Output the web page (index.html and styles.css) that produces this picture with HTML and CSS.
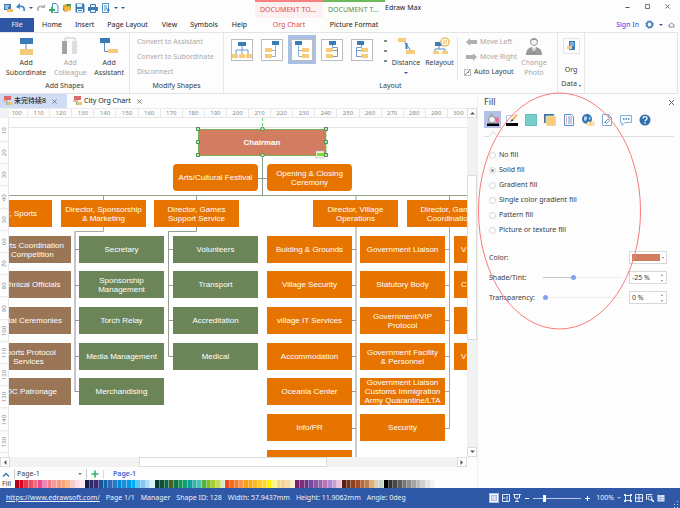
FILE: index.html
```html
<!DOCTYPE html>
<html lang="en">
<head>
<meta charset="utf-8">
<title>Edraw Max</title>
<link rel="stylesheet" href="styles.css">
</head>
<body>
<header class="top">
  <div class="top-left">
    <div class="qat">
      <button aria-label="Application menu"><svg width="10" height="10" viewBox="0 0 10 10"><path d="M1 1h7v6H1z" fill="#3a7ab5"/><path d="M2 3h4M2 5h3" stroke="#fff"/><path d="M4 6h6v3H4z" fill="#f0c060"/></svg></button>
      <button aria-label="Undo"><svg width="10" height="10" viewBox="0 0 10 10"><path d="M2 4c4-2 7 0 6 4" fill="none" stroke="#3a86c8" stroke-width="1.6"/><path d="M0 4l4-4v6z" fill="#3a86c8"/></svg></button>
      <i class="caret"></i>
      <button aria-label="Redo"><svg width="10" height="10" viewBox="0 0 10 10"><path d="M8 4C4 2 1 4 2 8" fill="none" stroke="#b4b4b4" stroke-width="1.6"/><path d="M9 5H5l4-4z" fill="#b4b4b4"/></svg></button>
      <button aria-label="New"><svg width="10" height="10" viewBox="0 0 10 10"><path d="M3.500 4V.5H7L9 3v6.500H5" fill="#fff" stroke="#4a8fc4"/><path d="M3 4v6M0 7h6" stroke="#2fae6b" stroke-width="2"/></svg></button>
      <button aria-label="Open"><svg width="10" height="10" viewBox="0 0 10 10"><path d="M1 2l3-1 1 1 4-1v6L3 9z" fill="#e9a72f"/><path d="M1 2l2 7-2-2z" fill="#c76b2c"/><path d="M4 1h5v4L6 6z" fill="#3d9c5b"/><path d="M3 4l6-1-2 5-4 1z" fill="#f3bd45"/></svg></button>
      <button aria-label="Save"><svg width="10" height="10" viewBox="0 0 10 10"><path d="M.5.5h8L9.500 2v7.500h-9z" fill="#3a7ab5"/><path d="M2 1h5v3H2zM2 6h6v3H2z" fill="#e6eff8"/><path d="M3 7.500h4" stroke="#3a7ab5"/></svg></button>
      <button aria-label="Print"><svg width="10" height="10" viewBox="0 0 10 10"><path d="M0 4h10v4H0z" fill="#3a7ab5"/><path d="M2.500 4V1.500h5V4M2.500 6.500h5v3h-5z" fill="#eaf2fa" stroke="#3a7ab5"/></svg></button>
      <button aria-label="Preview"><svg width="10" height="10" viewBox="0 0 10 10"><path d="M1.500.5h6v9h-6z" fill="#fff" stroke="#4a8fc4"/><path d="M3 3h3M3 5h3M3 7h2" stroke="#4a8fc4"/><path d="M5 5l4 2-2 2z" fill="#3a7ab5"/></svg></button>
      <i class="caret"></i>
      <i class="caret lined"></i>
    </div>
    <nav class="tabs">
      <button class="file">File</button>
      <button class="t-home">Home</button>
      <button class="t-insert">Insert</button>
      <button class="t-page">Page Layout</button>
      <button class="t-view">View</button>
      <button class="t-symbols">Symbols</button>
      <button class="t-help">Help</button>
    </nav>
  </div>
  <div class="context red"><span>DOCUMENT TO...</span><button>Org Chart</button></div>
  <div class="context green"><span>DOCUMENT T...</span><button>Picture Format</button></div>
  <div class="top-right">
    <div class="titlebar"><span class="title">Edraw Max</span>
      <div class="winbtns">
        <button aria-label="Minimize"><svg width="7" height="7" viewBox="0 0 7 7"><path d="M1.500 4.500h4" stroke="#555"/></svg></button>
        <button aria-label="Maximize"><svg width="7" height="7" viewBox="0 0 7 7"><path d="M1.500 1.500h4v4h-4z" fill="none" stroke="#777"/></svg></button>
        <button aria-label="Close"><svg width="7" height="7" viewBox="0 0 7 7"><path d="M1.500 1.500l4 4M5.500 1.500l-4 4" stroke="#666"/></svg></button>
      </div>
    </div>
    <div class="account"><a href="#">Sign In</a>
      <button aria-label="Options"><svg width="9" height="9" viewBox="0 0 9 9"><circle cx="4.500" cy="4.500" r="2.700" fill="none" stroke="#3f7fc0" stroke-width="1.600"/><circle cx="4.500" cy="4.500" r="3.800" fill="none" stroke="#3f7fc0" stroke-width="1" stroke-dasharray="1.500 1.500"/></svg></button>
      <i class="caret"></i>
      <button aria-label="Collapse ribbon" class="collapse"><svg width="7" height="6" viewBox="0 0 7 6"><path d="M1 3l2.500-2L6 3v2H1z" fill="none" stroke="#888"/></svg></button>
    </div>
  </div>
</header>

<section class="ribbon">
  <div class="group g-add">
    <div class="group-body">
      <button class="big"><svg width="20" height="20" viewBox="0 0 20 20"><path d="M10 6v7" stroke="#5b8fc0"/><path d="M4 1h13v6H4z" fill="#3a7ab5"/><path d="M4 12h13v6H4z" fill="#f4cc7b"/></svg>Add<br>Subordinate</button>
      <button class="big off"><svg width="20" height="20" viewBox="0 0 20 20"><path d="M5 4V1h10v3" fill="none" stroke="#c4c4c4"/><path d="M2 4h5v13H2z" fill="#a3a3a3"/><path d="M12 4h5v13h-5z" fill="#dedede"/></svg>Add<br>Colleague</button>
      <button class="big"><svg width="20" height="20" viewBox="0 0 20 20"><path d="M5.500 6v8.500H10" fill="none" stroke="#5b8fc0"/><path d="M1 1h10v5H1z" fill="#3a7ab5"/><path d="M9 12h10v4H9z" fill="#f4cc7b"/></svg>Add<br>Assistant</button>
    </div>
    <div class="group-label">Add Shapes</div>
  </div>
  <div class="group g-modify">
    <div class="group-body lines off">
      <button>Convert to Assistant</button>
      <button>Convert to Subordinate</button>
      <button>Disconnect</button>
    </div>
    <div class="group-label">Modify Shapes</div>
  </div>
  <div class="group g-layout">
    <div class="group-body">
      <div class="gallery">
        <button aria-label="Horizontal"><svg width="20" height="20" viewBox="0 0 20 20"><path d="M10 6v8M4 14v-4h12v4" fill="none" stroke="#6a9bd0"/><path d="M6 2h8v4H6z" fill="#3a7ab5"/><path d="M0 14h6v4H0zM7 14h6v4H7zM14 14h6v4h-6z" fill="#f4cc7b"/></svg></button>
        <button aria-label="Left hanging"><svg width="20" height="20" viewBox="0 0 20 20"><path d="M13.500 5v11.500H9M13.500 10.500H9" fill="none" stroke="#8fb4dc"/><path d="M10 1h7v4h-7z" fill="#3a7ab5"/><path d="M3 8h7v4H3zM3 14h7v4H3z" fill="#f4cc7b"/></svg></button>
        <button aria-label="Right hanging" class="on"><svg width="20" height="20" viewBox="0 0 20 20"><path d="M6.500 5v11.500H11M6.500 10.500H11" fill="none" stroke="#8fb4dc"/><path d="M3 1h7v4H3z" fill="#3a7ab5"/><path d="M10 8h7v4h-7zM10 14h7v4h-7z" fill="#f4cc7b"/></svg></button>
        <button aria-label="Left offset"><svg width="20" height="20" viewBox="0 0 20 20"><path d="M10.500 5v2.500h5v9H11M15.500 10.500H11" fill="none" stroke="#6a9bd0"/><path d="M7 1h7v4H7z" fill="#3a7ab5"/><path d="M4 8h7v4H4zM4 14h7v4H4z" fill="#f4cc7b"/></svg></button>
        <button aria-label="Right offset"><svg width="20" height="20" viewBox="0 0 20 20"><path d="M9.500 5v2.500h-5v9H9M4.500 10.500H9" fill="none" stroke="#6a9bd0"/><path d="M5 1h7v4H5z" fill="#3a7ab5"/><path d="M9 8h7v4H9zM9 14h7v4H9z" fill="#f4cc7b"/></svg></button>
      </div>
      <div class="spin"><i></i><i></i><i></i></div>
      <button class="big distance"><svg width="20" height="20" viewBox="0 0 20 20"><path d="M8 4l7 10" stroke="#5b8fc0"/><path d="M10.500 6v6" stroke="#3a7ab5" stroke-width="2"/><path d="M2 1h8v4H2zM10 13h9v4h-9z" fill="#f4cc7b"/></svg>Distance<i class="caret"></i></button>
      <button class="big relayout"><svg width="20" height="20" viewBox="0 0 20 20"><path d="M9 8v4M5 14v-2h10v2" fill="none" stroke="#5b8fc0"/><path d="M5 5h7v4H5z" fill="#3a7ab5"/><path d="M3 14h6v3H3zM12 14h6v3h-6z" fill="#f4cc7b"/><circle cx="15" cy="5" r="4" fill="#fff" stroke="#f4c05f" stroke-width="1.600"/><path d="M13 4h4l-1-1M17 6h-4l1 1" fill="none" stroke="#f0b650"/></svg>Relayout</button>
      <div class="lines moves">
        <button class="off"><svg width="12" height="8" viewBox="0 0 12 8"><path d="M0 4l4-4v2h7v4H4v2z" fill="#b0b0b0"/></svg>Move Left</button>
        <button class="off"><svg width="12" height="8" viewBox="0 0 12 8"><path d="M11 4L7 0v2H0v4h7v2z" fill="#b0b0b0"/></svg>Move Right</button>
        <label class="auto"><input type="checkbox" checked>Auto Layout</label>
      </div>
      <button class="big off photo"><svg width="20" height="20" viewBox="0 0 20 20"><circle cx="10" cy="5" r="3.500" fill="#f4f4f4" stroke="#999"/><path d="M6 5c0-5 8-5 8 0l-2-2H8z" fill="#999"/><path d="M2 18c0-5 2-7 6-8l2 2 2-2c4 1 6 3 6 8z" fill="#999"/><path d="M8 10l2 8 2-8-2 2z" fill="#fff"/><path d="M10 11l-1 6h2z" fill="#777"/></svg>Change<br>Photo</button>
    </div>
    <div class="group-label">Layout</div>
  </div>
  <div class="group g-data">
    <button class="data"><span class="tile"><svg width="9" height="10" viewBox="0 0 9 10"><path d="M2 0h6v9H2z" fill="#3a7ab5"/><path d="M3 2h4M3 4h4" stroke="#cfe0f2"/><path d="M0 5h5v3H0z" fill="#f4cc7b"/></svg></span><span>Org</span><span>Data <i class="caret"></i></span></button>
  </div>
</section>

<main class="work">
  <section class="editor">
    <div class="doctabs">
      <div class="doctab on"><svg width="9" height="10" viewBox="0 0 9 10"><path d="M1 0h7v4H1z" fill="#dd6a6a"/><path d="M0 4h5v2H0z" fill="#efb0a0"/><path d="M3.500 6v2.500H5" fill="none" stroke="#7aa"/><path d="M4 6h5v3H4z" fill="#f2c55c"/></svg><span lang="zh">未完待续8</span><button aria-label="Close tab"><svg width="5" height="5" viewBox="0 0 5 5"><path d="M.5.5l4 4M4.500.5l-4 4" stroke="#666" stroke-width=".8"/></svg></button></div>
      <div class="doctab"><svg width="9" height="10" viewBox="0 0 9 10"><path d="M1 0h7v4H1z" fill="#dd6a6a"/><path d="M0 4h5v2H0z" fill="#efb0a0"/><path d="M3.500 6v2.500H5" fill="none" stroke="#7aa"/><path d="M4 6h5v3H4z" fill="#f2c55c"/></svg><span>City Org Chart</span><button aria-label="Close tab"><svg width="5" height="5" viewBox="0 0 5 5"><path d="M.5.5l4 4M4.500.5l-4 4" stroke="#666" stroke-width=".8"/></svg></button></div>
    </div>
    <div class="sheet">
      <div class="corner"></div>
      <div class="ruler-h"><div class="marks"><span>100</span><span>110</span><span>120</span><span>130</span><span>140</span><span>150</span><span>160</span><span>170</span><span>180</span><span>190</span><span>200</span><span>210</span><span>220</span><span>230</span><span>240</span><span>250</span><span>260</span><span>270</span><span>280</span><span>290</span><span>300</span></div></div>
      <div class="ruler-v"><span>10</span><span>20</span><span>30</span><span>40</span><span>50</span><span>60</span><span>70</span><span>80</span><span>90</span><span>100</span><span>110</span><span>120</span><span>130</span><span>140</span><span>150</span></div>
      <div class="canvas">
        <svg class="wires" width="458" height="339" viewBox="9 118 458 339" fill="none">
          <path d="M9 127.500H467" stroke="#e4e4e4"/>
          <path d="M262.500 155V195M258 178.500H267" stroke="#8a9a8a"/>
          <path d="M9 195.500H467M103.500 195V200M196.500 195V200M356 195V200M449.500 195V200" stroke="#8fa287"/>
          <path d="M103.500 227V231.500H75" stroke="#a8a8a8"/>
          <path d="M75 231V392" stroke="#c6c6c8" stroke-width="2"/>
          <path d="M75 249.500H79M75 285.500H79M75 320.500H79M75 356.500H79M75 391.500H79" stroke="#999"/>
          <path d="M196.500 227V231.500H168.500V356.500H173M168 249.500H173M168 285.500H173M168 320.500H173" stroke="#94a08c"/>
          <path d="M356 227V457" stroke="#cacaca" stroke-width="2"/>
          <path d="M352 249.500H356M352 285.500H356M352 320.500H356M352 356.500H356M352 391.500H356M352 428.500H356" stroke="#999"/>
          <path d="M449.500 227V428.500H445M445 249.500H449M445 285.500H449M445 320.500H449M445 356.500H449M445 391.500H449" stroke="#a8a8a8"/>
        </svg>
        <div class="node chair">Chairman</div>
        <div class="node soft c3 top-row">Arts/Cultural Festival</div>
        <div class="node soft c4 top-row">Opening &amp; Closing<br>Ceremony</div>

        <div class="node d1 dir">Director, Sports</div>
        <div class="node d2 dir">Director, Sponsorship<br>&amp; Marketing</div>
        <div class="node d3 dir">Director, Games<br>Support Service</div>
        <div class="node d4 dir">Director, Village<br>Operations</div>
        <div class="node d5 dir">Director, Games<br>Coordination</div>

        <div class="node brown c1 r1">Sports Coordination<br>&amp; Competition</div>
        <div class="node brown c1 r2">Technical Officials</div>
        <div class="node brown c1 r3">Medal Ceremonies</div>
        <div class="node brown c1 r4">Sports Protocol<br>Services</div>
        <div class="node brown c1 r5">NOC Patronage</div>

        <div class="node olive c2 r1">Secretary</div>
        <div class="node olive c2 r2">Sponsorship<br>Management</div>
        <div class="node olive c2 r3">Torch Relay</div>
        <div class="node olive c2 r4">Media Management</div>
        <div class="node olive c2 r5">Merchandising</div>

        <div class="node olive c3 r1">Volunteers</div>
        <div class="node olive c3 r2">Transport</div>
        <div class="node olive c3 r3">Accreditation</div>
        <div class="node olive c3 r4">Medical</div>

        <div class="node c4 r1">Buiding &amp; Grounds</div>
        <div class="node c4 r2">Village Security</div>
        <div class="node c4 r3">village IT Services</div>
        <div class="node c4 r4">Accommodation</div>
        <div class="node c4 r5">Oceania Center</div>
        <div class="node c4 r6">Info/PR</div>
        <div class="node c4 r7"></div>

        <div class="node c5 r1">Government Liaison</div>
        <div class="node c5 r2">Statutory Body</div>
        <div class="node c5 r3">Government/VIP<br>Protocol</div>
        <div class="node c5 r4">Government Facility<br>&amp; Personnel</div>
        <div class="node c5 r5">Government Liaison<br>Customs Immigration<br>Army Quarantine/LTA</div>
        <div class="node c5 r6">Security</div>

        <div class="node cut c6 r1">V</div>
        <div class="node cut c6 r2">C</div>
        <div class="node c6 r3"></div>
        <div class="node cut c6 r4">V</div>

        <svg class="selection" width="134" height="44" viewBox="195 115 134 44">
          <path d="M262.500 118v11" stroke="#5fe05f" stroke-dasharray="3 2"/>
          <path d="M198.500 129.500h127.500v26H198.500z" fill="none" stroke="#5cc34c" stroke-dasharray="3 1"/>
          <path d="M316 151h8v7h-8z" fill="#eee" stroke="#aaa" stroke-width=".5"/><path d="M317 153h7v3h-7z" fill="#7be01f"/>
          <g fill="#b8f0b8" stroke="#4d8a56"><path d="M196.500 127.500h3v3h-3zM196.500 140.500h3v3h-3zM196.500 153.500h3v3h-3zM324.500 127.500h3v3h-3zM324.500 140.500h3v3h-3zM324.500 153.500h3v3h-3z"/><circle cx="262.500" cy="129" r="1.800"/><circle cx="262.500" cy="155" r="1.800"/></g>
        </svg>
      </div>
      <div class="scroll-v"><button aria-label="Scroll up"><svg width="5" height="4" viewBox="0 0 5 4"><path d="M0 3.500L2.500 1 5 3.500z" fill="#555"/></svg></button><div class="track"><div class="thumb"></div></div><button aria-label="Scroll down"><svg width="5" height="4" viewBox="0 0 5 4"><path d="M0 .5L2.500 3 5 .5z" fill="#555"/></svg></button></div>
      <div class="scroll-h"><button aria-label="Scroll left"><svg width="4" height="5" viewBox="0 0 4 5"><path d="M3.500 0L1 2.500 3.500 5z" fill="#555"/></svg></button><div class="track"><div class="thumb"></div></div><button aria-label="Scroll right"><svg width="4" height="5" viewBox="0 0 4 5"><path d="M.5 0L3 2.500.5 5z" fill="#555"/></svg></button></div>
    </div>
    <div class="pagebar">
      <svg width="8" height="5" viewBox="0 0 8 5"><path d="M1 4.500L4 1.500l3 3" fill="none" stroke="#2f78b8" stroke-width="1.400"/></svg>
      <span class="page-select"><select aria-label="Page"><option>Page-1</option></select><i class="caret"></i></span>
      <button aria-label="Add page" class="plus"><svg width="8" height="8" viewBox="0 0 8 8"><path d="M4 .5v7M.5 4h7" stroke="#35b06c" stroke-width="1.600"/></svg></button>
      <button class="pagetab">Page-1</button>
    </div>
    <div class="colorbar"><span>Fill</span><div class="swatches" id="swatches"></div></div>
  </section>

  <aside class="panel">
    <div class="panel-head"><h2>Fill</h2><button aria-label="Close panel"><svg width="7" height="7" viewBox="0 0 7 7"><path d="M1 1l5 5M6 1L1 6" stroke="#666"/></svg></button></div>
    <div class="tools">
      <button class="on" aria-label="Fill"><svg width="14" height="14" viewBox="0 0 14 14"><path d="M3 4l4-1 3 4-3 3-4-1z" fill="#f2f2f2" stroke="#999"/><path d="M4 4c0-4 3-4 3 0" fill="none" stroke="#999"/><path d="M9 4l4 1v4l-2 1-2-3z" fill="#e8709c"/><path d="M1 10.500h12v2.500H1z" fill="#000"/></svg></button>
      <button aria-label="Line"><svg width="14" height="14" viewBox="0 0 14 14"><path d="M1.500 9V2.500H9" fill="none" stroke="#b3cbe8"/><path d="M6 8l1-2 4-5 2 1-4 5z" fill="#f0c060"/><path d="M5 9l2-3 1.500 1.500z" fill="#444"/><path d="M1 10h12v3H1z" fill="#000"/></svg></button>
      <button aria-label="Shadow"><svg width="14" height="14" viewBox="0 0 14 14"><path d="M1.500 1.500h11v11h-11z" fill="#76cfc9" stroke="#5fbfb8"/></svg></button>
      <button aria-label="Layers"><svg width="14" height="14" viewBox="0 0 14 14"><path d="M1 1h10v9H1z" fill="#3f76ac"/><path d="M3 3h10v10H3z" fill="#f4cc7b" stroke="#fff" stroke-width=".5"/></svg></button>
      <button aria-label="Page"><svg width="14" height="14" viewBox="0 0 14 14"><path d="M2.500 1.500h7l2 2v9h-9z" fill="#fff" stroke="#5b8fc8"/><path d="M4 4h1M4 6h1M4 8h1M4 10h1" stroke="#e05050"/><path d="M6 4h4M6 6h4M6 8h4M6 10h4" stroke="#6b9fd0"/></svg></button>
      <button aria-label="Hyperlink"><svg width="14" height="14" viewBox="0 0 14 14"><circle cx="6" cy="6" r="5" fill="#2f73b0"/><path d="M3 4c2-2 4 0 3 2s-2 3-3 1zM8 3l2 3-2 1z" fill="#b5d3ee"/><rect x="6" y="9" width="4" height="3" rx="1" fill="#fff" stroke="#f0c060"/><rect x="9" y="9" width="4" height="3" rx="1" fill="none" stroke="#f0c060"/></svg></button>
      <button aria-label="Attachment"><svg width="14" height="14" viewBox="0 0 14 14"><path d="M2.500 1.500h6l3 3v8h-9z" fill="#fff" stroke="#8aa9cc"/><path d="M8.500 1.500v3h3" fill="none" stroke="#8aa9cc"/><path d="M4 10l4-4 1.500 1.500-3 3L5 9" fill="none" stroke="#6b9fd0"/></svg></button>
      <button aria-label="Comment"><svg width="14" height="14" viewBox="0 0 14 14"><path d="M1.500 2.500h11v7H6l-3 3v-3H1.500z" fill="#fff" stroke="#7fb0de"/><path d="M4 6h1.500M6.500 6H8M9 6h1.500" stroke="#3a7ab5" stroke-width="1.500"/></svg></button>
      <button aria-label="Help"><svg width="14" height="14" viewBox="0 0 14 14"><circle cx="7" cy="7" r="5.500" fill="#2f6fad"/><path d="M5 5.500c0-2.500 4-2.500 4 0 0 1.500-2 1.200-2 2.800M7 9.300v1.400" fill="none" stroke="#fff" stroke-width="1.300"/></svg></button>
    </div>
    <svg class="pointer" width="190" height="9" viewBox="0 0 190 9"><path d="M0 7.500h5l4-5 4 5h177" fill="none" stroke="#dedede"/></svg>
    <div class="radios">
      <label><input type="radio" name="fill">No fill</label>
      <label><input type="radio" name="fill" checked>Solid fill</label>
      <label><input type="radio" name="fill">Gradient fill</label>
      <label><input type="radio" name="fill">Single color gradient fill</label>
      <label><input type="radio" name="fill">Pattern fill</label>
      <label><input type="radio" name="fill">Picture or texture fill</label>
    </div>
    <div class="fields">
      <label for="color">Color:</label><span></span>
      <button id="color" class="box color" aria-label="Color"><b></b><i class="caret"></i></button>
      <label for="shade">Shade/Tint:</label><input class="shade" id="shade" type="range" min="-100" max="100" value="-25">
      <span class="box"><input type="text" aria-label="Shade value" value="-25 %"><span class="updown"><i></i><i></i></span></span>
      <label for="trans">Transparency:</label><input id="trans" type="range" min="0" max="100" value="0">
      <span class="box"><input type="text" aria-label="Transparency value" value="0 %"><span class="updown"><i></i><i></i></span></span>
    </div>
    <svg class="ring" width="166" height="242" viewBox="0 0 166 242"><ellipse cx="82.500" cy="121" rx="81" ry="118" fill="none" stroke="#fa7a7a"/></svg>
  </aside>
</main>

<footer class="status">
  <a href="#">https://www.edrawsoft.com/</a><span>Page 1/1</span><span>Manager</span><span>Shape ID: 128</span><span>Width: 57.9437mm</span><span>Height: 11.9062mm</span><span>Angle: 0deg</span>
  <div class="view">
    <button class="on" aria-label="Normal view"><svg width="8" height="8" viewBox="0 0 8 8"><path d="M.5.5h7v7h-7zM2 3h4M2 5h4" fill="none" stroke="#fff"/></svg></button>
    <button aria-label="Full page view"><svg width="8" height="8" viewBox="0 0 8 8"><path d="M.5.5h7v7h-7zM.5 4h3M5 2v5" fill="none" stroke="#dfe7f5"/></svg></button>
    <button aria-label="Presentation"><svg width="8" height="8" viewBox="0 0 8 8"><path d="M0 .5h8M1.500 1v3h5V1M4 4v3.500M2 7.500h4" fill="none" stroke="#dfe7f5"/></svg></button>
    <button aria-label="Zoom out"><svg width="6" height="6" viewBox="0 0 6 6"><path d="M1 3.500h4" stroke="#fff"/></svg></button>
    <input type="range" aria-label="Zoom" min="0" max="100" value="22">
    <button aria-label="Zoom in"><svg width="6" height="6" viewBox="0 0 6 6"><path d="M1 3.500h5M3.500 1v5" stroke="#fff"/></svg></button>
    <span class="pct">100%</span><i class="caret"></i>
    <button aria-label="Fit page"><svg width="8" height="8" viewBox="0 0 8 8"><path d="M1.500 1.500h5v5h-5z" fill="none" stroke="#dfe7f5"/><path d="M0 0h2v2H0zM6 0h2v2H6zM0 6h2v2H0zM6 6h2v2H6z" fill="#dfe7f5"/></svg></button>
    <button aria-label="Fit width"><svg width="8" height="8" viewBox="0 0 8 8"><path d="M.5.5h7v7h-7zM4 1v6M1 4h6" fill="none" stroke="#dfe7f5"/></svg></button>
    <button aria-label="Zoom area"><svg width="8" height="8" viewBox="0 0 8 8"><path d="M.5 6V.5h6" fill="none" stroke="#dfe7f5"/><circle cx="4" cy="4" r="2" fill="none" stroke="#dfe7f5"/><path d="M5 5l3 3" stroke="#fff" stroke-width="1.400"/></svg></button>
    <button aria-label="Grid"><svg width="8" height="8" viewBox="0 0 8 8"><path d="M.5 1h7v6.500h-7z" fill="#dfe7f5"/><path d="M0 3.500h8M0 5.500h8M3.500 1v7" stroke="#7d97cc" stroke-width=".6"/></svg></button>
    <svg class="grip" width="7" height="7" viewBox="0 0 7 7"><path d="M5 0h1v1H5zM5 3h1v1H5zM5 6h1v1H5zM2 3h1v1H2zM2 6h1v1H2z" fill="#c5d1ea"/></svg>
  </div>
</footer>
<script src="palette.js"></script>
</body>
</html>
```
FILE: palette.js
```js
const palette = [
  "#b5001c","#e0001b","#e23b50","#ef4c62","#f2707e","#ea4a94","#f086b4","#f2808a","#f59a96","#f49a86","#f7a472","#fab98c","#f4cdd4","#fadbe6","#fce8ee",
  "#0f1c4d","#282a62","#3a2a78","#1b5591","#0a67b0","#3566b5","#1c7fc8","#0088d4","#1a8fe0","#0099e8","#00acf4","#5cc6f4","#88c4ee","#b2dcf4","#d6f0fa",
  "#063c2c","#0d5034","#0a6644","#4c5e24","#0b7848","#119a4e","#109f76","#109f96","#34b6aa","#4fc0b0","#55b03c","#84bf1c","#a8d034","#c8dc5c","#d2ecd2",
  "#ee4a1c","#f26a20","#f47c2c","#f79654","#f99f10","#fbab10","#fcb72c","#fdcc2e","#fdda1c","#fdf000","#fbf48c","#f9d884","#f8d098","#f4dcae","#fcf0cc",
  "#74206c","#7c2e7c","#663494","#744a9e","#8c5aa4","#9a68ac","#c470b2","#a88cd0","#c8a0d0","#efc2de",
  "#5a2010","#7a3014","#8a4220","#a44a20","#b86a3a","#bc8050","#dcae78","#d6cfc2","#c4d6ca",
  "#000000","#303030","#484848","#5e5e5e","#767676","#8e8e8e","#a4a4a4","#bababa","#d0d0d0","#e4e4e4","#f4f4f4"
];
const strip = document.getElementById("swatches");
palette.forEach(color => {
  const cell = document.createElement("span");
  cell.style.background = color;
  strip.append(cell);
});
```
FILE: styles.css
```css
* { box-sizing: border-box; }
body {
  margin: 0;
  min-height: 100vh;
  display: flex;
  flex-direction: column;
  background: #fdfdfd;
  color: #3c3c3c;
  font: 7px/10px "Noto Sans", "Noto Sans CJK SC", sans-serif;
}
button, input, select { font: inherit; color: inherit; border: 0; padding: 0; margin: 0; background: none; }
svg { display: block; flex: none; }
a { color: inherit; }
.caret { display: inline-block; flex: none; border: 2px solid transparent; border-top-color: #2f5597; border-bottom: 0; }
.caret.lined { box-shadow: 0 -2px 0 -1px #2f5597; }

/* title bar and ribbon tabs */
.top { display: flex; height: 32px; color: #222; }
.top-left { width: 255px; }
.qat { display: flex; align-items: center; gap: 3px; height: 15px; padding-left: 3px; }
.tabs { display: flex; align-items: center; height: 14px; margin-top: 3px; gap: 13px; }
.tabs button { line-height: 14px; }
.tabs .file { width: 34px; margin-right: -5px; background: #2f56a5; color: #e8eefa; }
.tabs .t-view, .tabs .t-help { margin-left: 1px; }
.context { display: flex; flex-direction: column; width: 68px; border-top: 2px solid; }
.context span { padding: 2px 5px; height: 16px; line-height: 11px; white-space: nowrap; }
.context button { line-height: 14px; }
.context.red { border-color: #f98080; color: #dc4b55; }
.context.red span { background: #fdf0f0; }
.context.green { width: 62px; border-color: #6cba5c; color: #5c8f55; }
.context.green button { color: #222; }
.context.green, .context.green button { background: #fbfdf9; white-space: nowrap; }
.top-right { flex: 1; }
.titlebar { display: flex; justify-content: space-between; height: 17px; }
.title { line-height: 16px; }
.winbtns { display: flex; gap: 13px; padding: 3px 9px 0 0; height: 10px; }
.account { display: flex; align-items: center; justify-content: flex-end; gap: 5px; height: 15px; padding-right: 5px; }
.account a { color: #3a3af0; text-decoration: none; }
.account a + button { margin-left: 1px; }

/* ribbon */
.ribbon { display: flex; height: 62px; margin-right: 2px; border: 1px solid #e4e4e4; border-left: 0; }
.group { display: flex; flex-direction: column; padding-top: 4px; border-right: 1px solid #e6e6e6; }
.group-body { display: flex; height: 43px; }
.group-label { padding-top: 1px; text-align: center; }
.g-add { width: 130px; }
.g-add .group-body { padding: 0 5px 0 6px; justify-content: space-between; }
.g-modify { width: 94px; }
.g-layout { width: 334px; }
.g-data { width: 27px; }
.big { display: flex; flex-direction: column; align-items: center; line-height: 10px; }
.big svg { margin-bottom: 1px; }
.big .caret { margin-top: 4px; }
.off { color: #a8a8a8; }
.lines { display: flex; flex-direction: column; align-items: flex-start; gap: 5px; }
.lines button { display: flex; align-items: center; gap: 2px; white-space: nowrap; }
.g-modify .lines { padding-left: 7px; }
.gallery { display: flex; gap: 2px; padding-left: 4px; margin-top: -2px; }
.gallery button { width: 28px; height: 29px; padding: 3px; }
.gallery svg { width: 22px; height: 22px; border: 1px solid #bcbcbc; background: #fff; }
.gallery .on { background: #a9bfe4; }
.spin { display: flex; flex-direction: column; gap: 8px; width: 4px; padding-top: 3px; margin-left: 8px; }
.spin i { width: 3px; height: 2px; background: #888; }
.distance { width: 36px; }
.relayout { width: 31px; }
.moves { width: 56px; padding-left: 8px; margin-left: 2px; border-left: 1px solid #e6e6e6; }
.auto { display: flex; align-items: center; gap: 3px; white-space: nowrap; margin-left: -2px; }
.auto input { appearance: none; width: 7px; height: 7px; border: 1px solid #bbb; background: linear-gradient(135deg, transparent 45%, #888 45% 60%, transparent 60%); }
.photo { width: 42px; }
.data { display: flex; flex-direction: column; align-items: center; gap: 4px; padding-top: 1px; white-space: nowrap; }
.tile { display: grid; place-items: center; width: 17px; height: 16px; margin-bottom: 7px; border: 1px solid #dfe5ee; }
.data .caret { vertical-align: -1px; border-width: 2px 1px 0; }

/* workspace */
.work { flex: 1; display: grid; grid-template-columns: minmax(0, 1fr) 203px; }
.editor { display: flex; flex-direction: column; min-width: 0; }
.doctabs { display: flex; height: 14px; gap: 3px; }
.doctab { display: flex; align-items: center; gap: 2px; padding-left: 3px; color: #222; }
.doctab button { padding-left: 4px; }
.doctab.on { width: 67px; background: #cfdcf5; }
.doctab.on span { font-weight: 500; }
.sheet { flex: 1; display: grid; grid-template: 10px minmax(0, 1fr) 10px / 9px minmax(0, 1fr) 10px; }
.corner { background: #f2f2f2; }
.ruler-h { overflow: hidden; border-top: 1px solid #ebebeb; border-bottom: 1px solid #e6e6e6; color: #8c8c8c; font-size: 6px; line-height: 8px; }
.marks { display: grid; grid-template-columns: repeat(21, 1fr); margin: 0 -2px 0 -4px; text-align: center; }
.marks span { border-left: 1px solid #e8e8e8; }
.ruler-v { grid-row: 2; grid-column: 1; display: grid; grid-template-rows: repeat(15, 1fr); padding: 2px 0 4px; border-right: 1px solid #e6e6e6; color: #8c8c8c; font-size: 6px; line-height: 8px; }
.ruler-v span { writing-mode: vertical-rl; transform: rotate(180deg); text-align: center; border-top: 1px solid #e8e8e8; }
.canvas { position: relative; overflow: hidden; grid-row: 2; grid-column: 2; background: #fff; }
.wires, .selection { position: absolute; left: 0; top: 0; }
.selection { left: 186px; top: -3px; }
.scroll-v { grid-row: 1 / 3; grid-column: 3; display: flex; flex-direction: column; background: #f2f2f2; }
.scroll-h { grid-row: 3; grid-column: 1 / 3; display: flex; background: #f2f2f2; }
.scroll-v button, .scroll-h button { display: grid; place-items: center; width: 10px; height: 10px; background: #fff; border: 1px solid #dcdcdc; }
.track { flex: 1; }
.thumb { background: #fff; border: 1px solid #dcdcdc; }
.scroll-v .thumb { height: 50%; margin-top: 57px; }
.scroll-h .thumb { width: 42%; height: 10px; margin-left: 129px; }

/* diagram nodes */
.node {
  position: absolute;
  display: grid;
  place-content: center;
  width: 85px;
  height: 27px;
  overflow: hidden;
  background: #e87400;
  color: #fff;
  font: 8px/9px "Liberation Sans", sans-serif;
  text-align: center;
  white-space: nowrap;
}
.brown { background: #9a7657; }
.olive { background: #6c8558; }
.soft { border-radius: 4px; }
.cut { place-content: center start; padding-left: 7px; }
.chair { left: 189px; top: 11px; width: 128px; background: #d27d62; font-weight: bold; }
.top-row { top: 46px; }
.dir { top: 82px; }
.d1 { left: -42px; } .d2 { left: 52px; } .d3 { left: 145px; } .d4 { left: 304px; } .d5 { left: 398px; }
.c1 { left: -23px; } .c2 { left: 70px; } .c3 { left: 164px; } .c4 { left: 258px; } .c5 { left: 351px; } .c6 { left: 445px; }
.r1 { top: 118px; } .r2 { top: 153px; } .r3 { top: 189px; } .r4 { top: 225px; } .r5 { top: 260px; } .r6 { top: 296px; } .r7 { top: 332px; }

/* page bar and palette */
.pagebar { display: flex; align-items: center; height: 13px; padding: 1px 0 0 2px; }
.page-select { display: flex; align-items: center; width: 73px; margin-left: 4px; padding-right: 4px; border: solid #ccc; border-width: 0 1px; line-height: 8px; }
.page-select select { flex: 1; appearance: none; padding-left: 2px; line-height: 10px; }
.page-select .caret { border-top-color: #777; }
.plus { margin: 0 4px; }
.pagetab { padding-left: 9px; border-left: 1px solid #ddd; color: #3f66d0; font-weight: 600; line-height: 8px; }
.colorbar { display: flex; align-items: center; height: 8px; padding-left: 2px; line-height: 8px; }
.colorbar > span { width: 13px; }
.swatches { display: flex; width: 420px; height: 8px; }
.swatches span { flex: 1; border-right: 1px solid #ffffff60; }

/* fill panel */
.panel { position: relative; padding: 3px 6px 0; border-left: 1px solid #eee; }
.panel-head { display: flex; justify-content: space-between; align-items: center; height: 10px; }
.panel-head button { margin-right: -1px; }
.panel h2 { margin: 0; font-size: 9px; font-weight: 400; line-height: 10px; }
.tools { display: flex; gap: 2px; margin-top: 4px; }
.tools button { display: grid; place-items: center; width: 17px; height: 17px; }
.tools .on { background: #b3c1e4; }
.pointer { width: 100%; margin-top: 1px; }
.radios { display: flex; flex-direction: column; gap: 5px; padding: 12px 0 0 5px; }
.radios label { display: flex; align-items: center; gap: 3px; }
.radios input { appearance: none; width: 7px; height: 7px; border: 1px solid #d4d4d4; border-radius: 50%; background: #fff; }
.radios input:checked { background: radial-gradient(#999 35%, #fff 45%); }
.fields { display: grid; grid-template-columns: 52px minmax(0, 1fr) 38px; align-items: center; gap: 7px 2px; padding: 16px 7px 0 5px; }
.box { display: flex; align-items: center; justify-content: space-between; height: 13px; padding: 0 2px; border: 1px solid #d8d8d8; background: #fff; }
.box input { width: 26px; }
.color b { width: 28px; height: 7px; background: #d27d62; }
.color .caret { border-width: 2px 1px 0; border-top-color: #888; }
.updown { display: flex; flex-direction: column; gap: 4px; padding-right: 1px; }
.updown i { border: 1px solid transparent; border-bottom: 2px solid #888; border-top: 0; }
.updown i + i { border-top: 2px solid #888; border-bottom: 0; }
input[type=range] { appearance: none; width: 100%; height: 6px; background: linear-gradient(#ececec, #ececec) center / 100% 1px no-repeat; }
input[type=range]::-webkit-slider-thumb { appearance: none; width: 5px; height: 5px; border-radius: 50%; background: #7fa3f0; }
.fields input[type=range] { width: calc(100% - 5px); }
.fields .shade { background: linear-gradient(90deg, #c4c4c4 37%, #ececec 37%) center / 100% 1px no-repeat; }
.ring { position: absolute; left: -1px; top: -4px; pointer-events: none; }

/* status bar */
.status { display: flex; align-items: center; gap: 6px; height: 20px; padding: 0 1px 0 6px; background: #2f58a6; color: #edf2fb; white-space: nowrap; }
.view { display: flex; align-items: center; gap: 3px; height: 20px; margin-left: auto; }
.view .on { padding: 1px; background: #a9bde3; }
.view input[type=range] { width: 48px; background: linear-gradient(#b9c6e2, #b9c6e2) center / 100% 1px no-repeat; }
.view input[type=range]::-webkit-slider-thumb { width: 3px; height: 7px; border-radius: 0; background: #fff; }
.pct { margin-left: 3px; }
.view .caret { border-top-color: #9fb2dc; }
.grip { align-self: flex-end; margin-left: 4px; }
```
